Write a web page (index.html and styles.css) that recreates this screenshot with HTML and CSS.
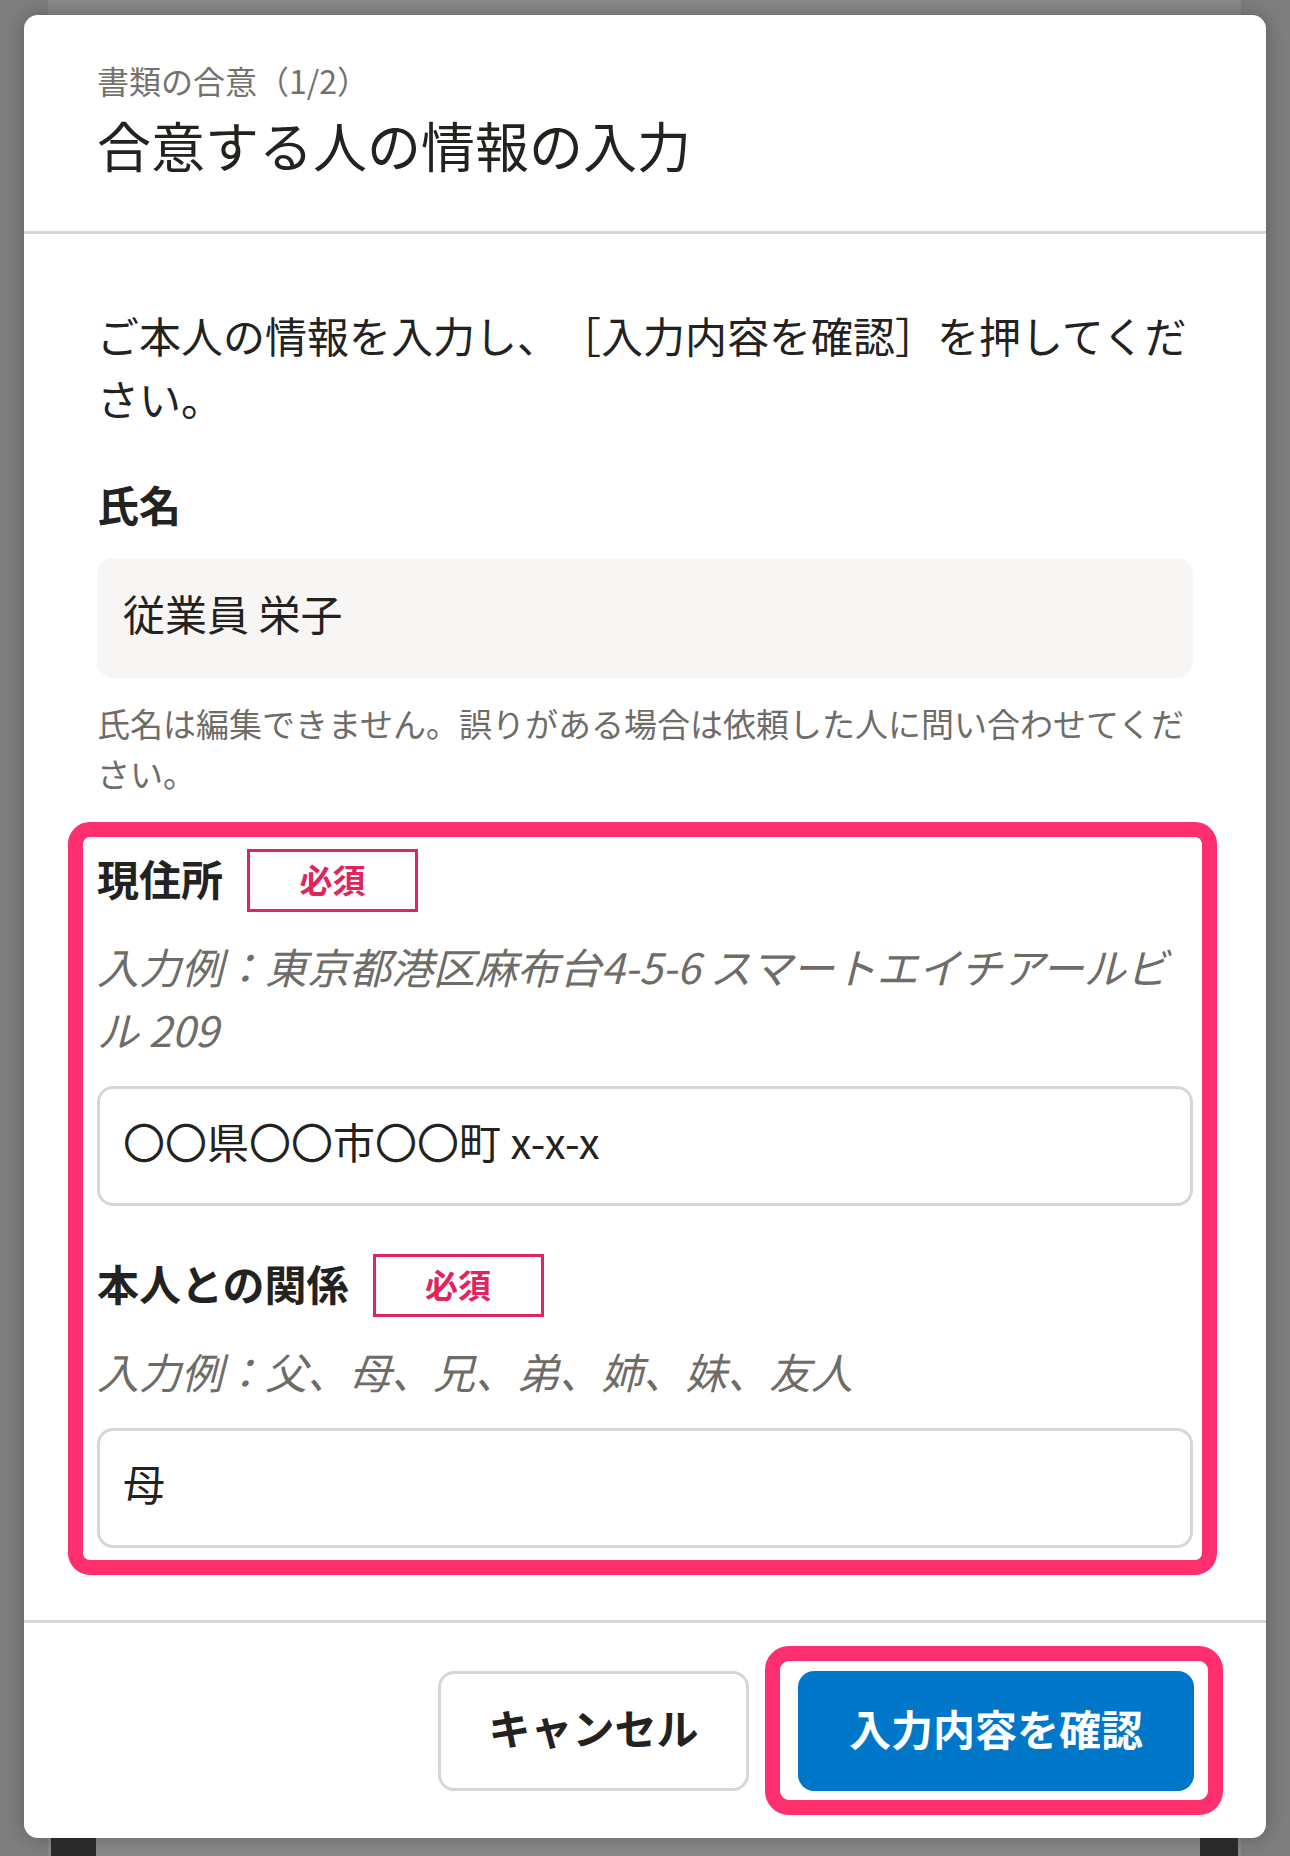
FILE: index.html
```html
<!DOCTYPE html>
<html lang="ja">
    <head>
        <meta charset="utf-8">
        <title>書類の合意</title>
        <link rel="stylesheet" href="styles.css">
    </head>
    <body>

        <div class="modal">

            <div class="header">
                <div class="step">書類の合意（1/2）</div>
                <div class="title">合意する人の情報の入力</div>
            </div>

            <div class="content">

                <p class="intro">ご本人の情報を入力し、［入力内容を確認］を押してください。</p>

                <div class="label">氏名</div>
                <input class="field locked" type="text" value="従業員 栄子" readonly>
                <p class="note">氏名は編集できません。誤りがある場合は依頼した人に問い合わせてください。</p>

                <div class="mark">

                    <div class="label-row">
                        <span class="label">現住所</span>
                        <span class="badge">必須</span>
                    </div>
                    <p class="example">入力例：東京都港区麻布台4-5-6 スマートエイチアールビル 209</p>
                    <input class="field" type="text" value="〇〇県〇〇市〇〇町 x-x-x">

                    <div class="label-row second">
                        <span class="label">本人との関係</span>
                        <span class="badge">必須</span>
                    </div>
                    <p class="example">入力例：父、母、兄、弟、姉、妹、友人</p>
                    <input class="field" type="text" value="母">

                </div>

            </div>

            <div class="footer">
                <button class="cancel">キャンセル</button>
                <div class="mark-button">
                    <button class="confirm">入力内容を確認</button>
                </div>
            </div>

        </div>

        <div class="under">
            <span class="under-block left"></span>
            <span class="under-block right"></span>
        </div>

    </body>
</html>
```

FILE: styles.css
```css
body {

    margin: 0;
    background: linear-gradient(to right, #7f7f7f 48px, #8a8a8a 48px, #8a8a8a 1241px, #7f7f7f 1241px);
    font-family: "Noto Sans CJK JP", "Noto Sans", sans-serif;
    color: #23221f;
    text-spacing-trim: space-all;

}

.modal {

    margin: 15px 24px 0 24px;
    background-color: #ffffff;
    border-radius: 14px;
    box-shadow: 0 0 22px rgba(0, 0, 0, 0.28);
    overflow: hidden;

}

.header {

    padding: 41px 73px 51px 73px;
    border-bottom: 3px solid #d9d6d2;

}

.step {

    font-size: 32px;
    line-height: 48px;
    color: #75726c;

}

.title {

    font-size: 54px;
    line-height: 70px;
    margin-top: 6px;

}

.content {

    padding: 69px 73px 45px 73px;
    display: flex;
    flex-direction: column;

}

.intro {

    margin: 0;
    font-size: 42px;
    line-height: 63px;

}

.label {

    font-size: 42px;
    line-height: 63px;
    font-weight: bold;

}

.content > .label {

    margin-top: 43px;

}

.field {

    display: block;
    box-sizing: border-box;
    width: 100%;
    height: 120px;
    margin: 23px 0 0 0;
    padding: 0 23px 12px 23px;
    border: 3px solid #d9d6d2;
    border-radius: 16px;
    background-color: #ffffff;
    font-family: "Noto Sans CJK JP", "Noto Sans", sans-serif;
    font-size: 42px;
    color: #23221f;
    outline: none;

}

.locked {

    background-color: #f7f6f4;
    border-color: #f7f6f4;

}

.note {

    margin: 20px 0 0 0;
    font-size: 33px;
    line-height: 50px;
    color: #6f6c67;

}

.mark {

    margin: 24px -24px 0 -29px;
    padding: 12px 9px 12px 14px;
    border: 15px solid #ff2e6e;
    border-radius: 22px;

}

.label-row {

    display: flex;
    align-items: center;
    gap: 24px;
    height: 63px;

}

.label-row .label {

    line-height: 58px;
    padding-bottom: 5px;

}

.label-row.second {

    margin-top: 48px;

}

.badge {

    box-sizing: border-box;
    width: 171px;
    height: 63px;
    padding-bottom: 4px;
    border: 3px solid #e0245e;
    color: #e0245e;
    font-size: 33px;
    font-weight: bold;
    display: flex;
    align-items: center;
    justify-content: center;

}

.example {

    margin: 22px 0 0 0;
    font-size: 42px;
    line-height: 63px;
    font-style: italic;
    color: #6f6c67;

}

.mark .field {

    margin-top: 26px;

}

.footer {

    border-top: 3px solid #d9d6d2;
    padding: 23px 73px;
    display: flex;
    justify-content: flex-end;
    align-items: center;
    gap: 16px;

}

.cancel,
.confirm {

    box-sizing: border-box;
    height: 120px;
    padding-bottom: 9px;
    border-radius: 16px;
    font-family: "Noto Sans CJK JP", "Noto Sans", sans-serif;
    font-size: 42px;
    font-weight: bold;
    cursor: pointer;

}

.cancel {

    width: 311px;
    border: 3px solid #d9d6d2;
    background-color: #ffffff;
    color: #23221f;

}

.mark-button {

    margin-right: -30px;
    padding: 10px 14px 9px 18px;
    border: 15px solid #ff2e6e;
    border-radius: 24px;

}

.confirm {

    display: block;
    width: 396px;
    border: none;
    background-color: #0077c8;
    color: #ffffff;

}

.under {

    display: flex;
    justify-content: space-between;
    height: 18px;
    padding: 0 52px 0 51px;

}

.under-block {

    background-color: #2a2a2a;

}

.left {

    width: 45px;

}

.right {

    width: 38px;

}
```
